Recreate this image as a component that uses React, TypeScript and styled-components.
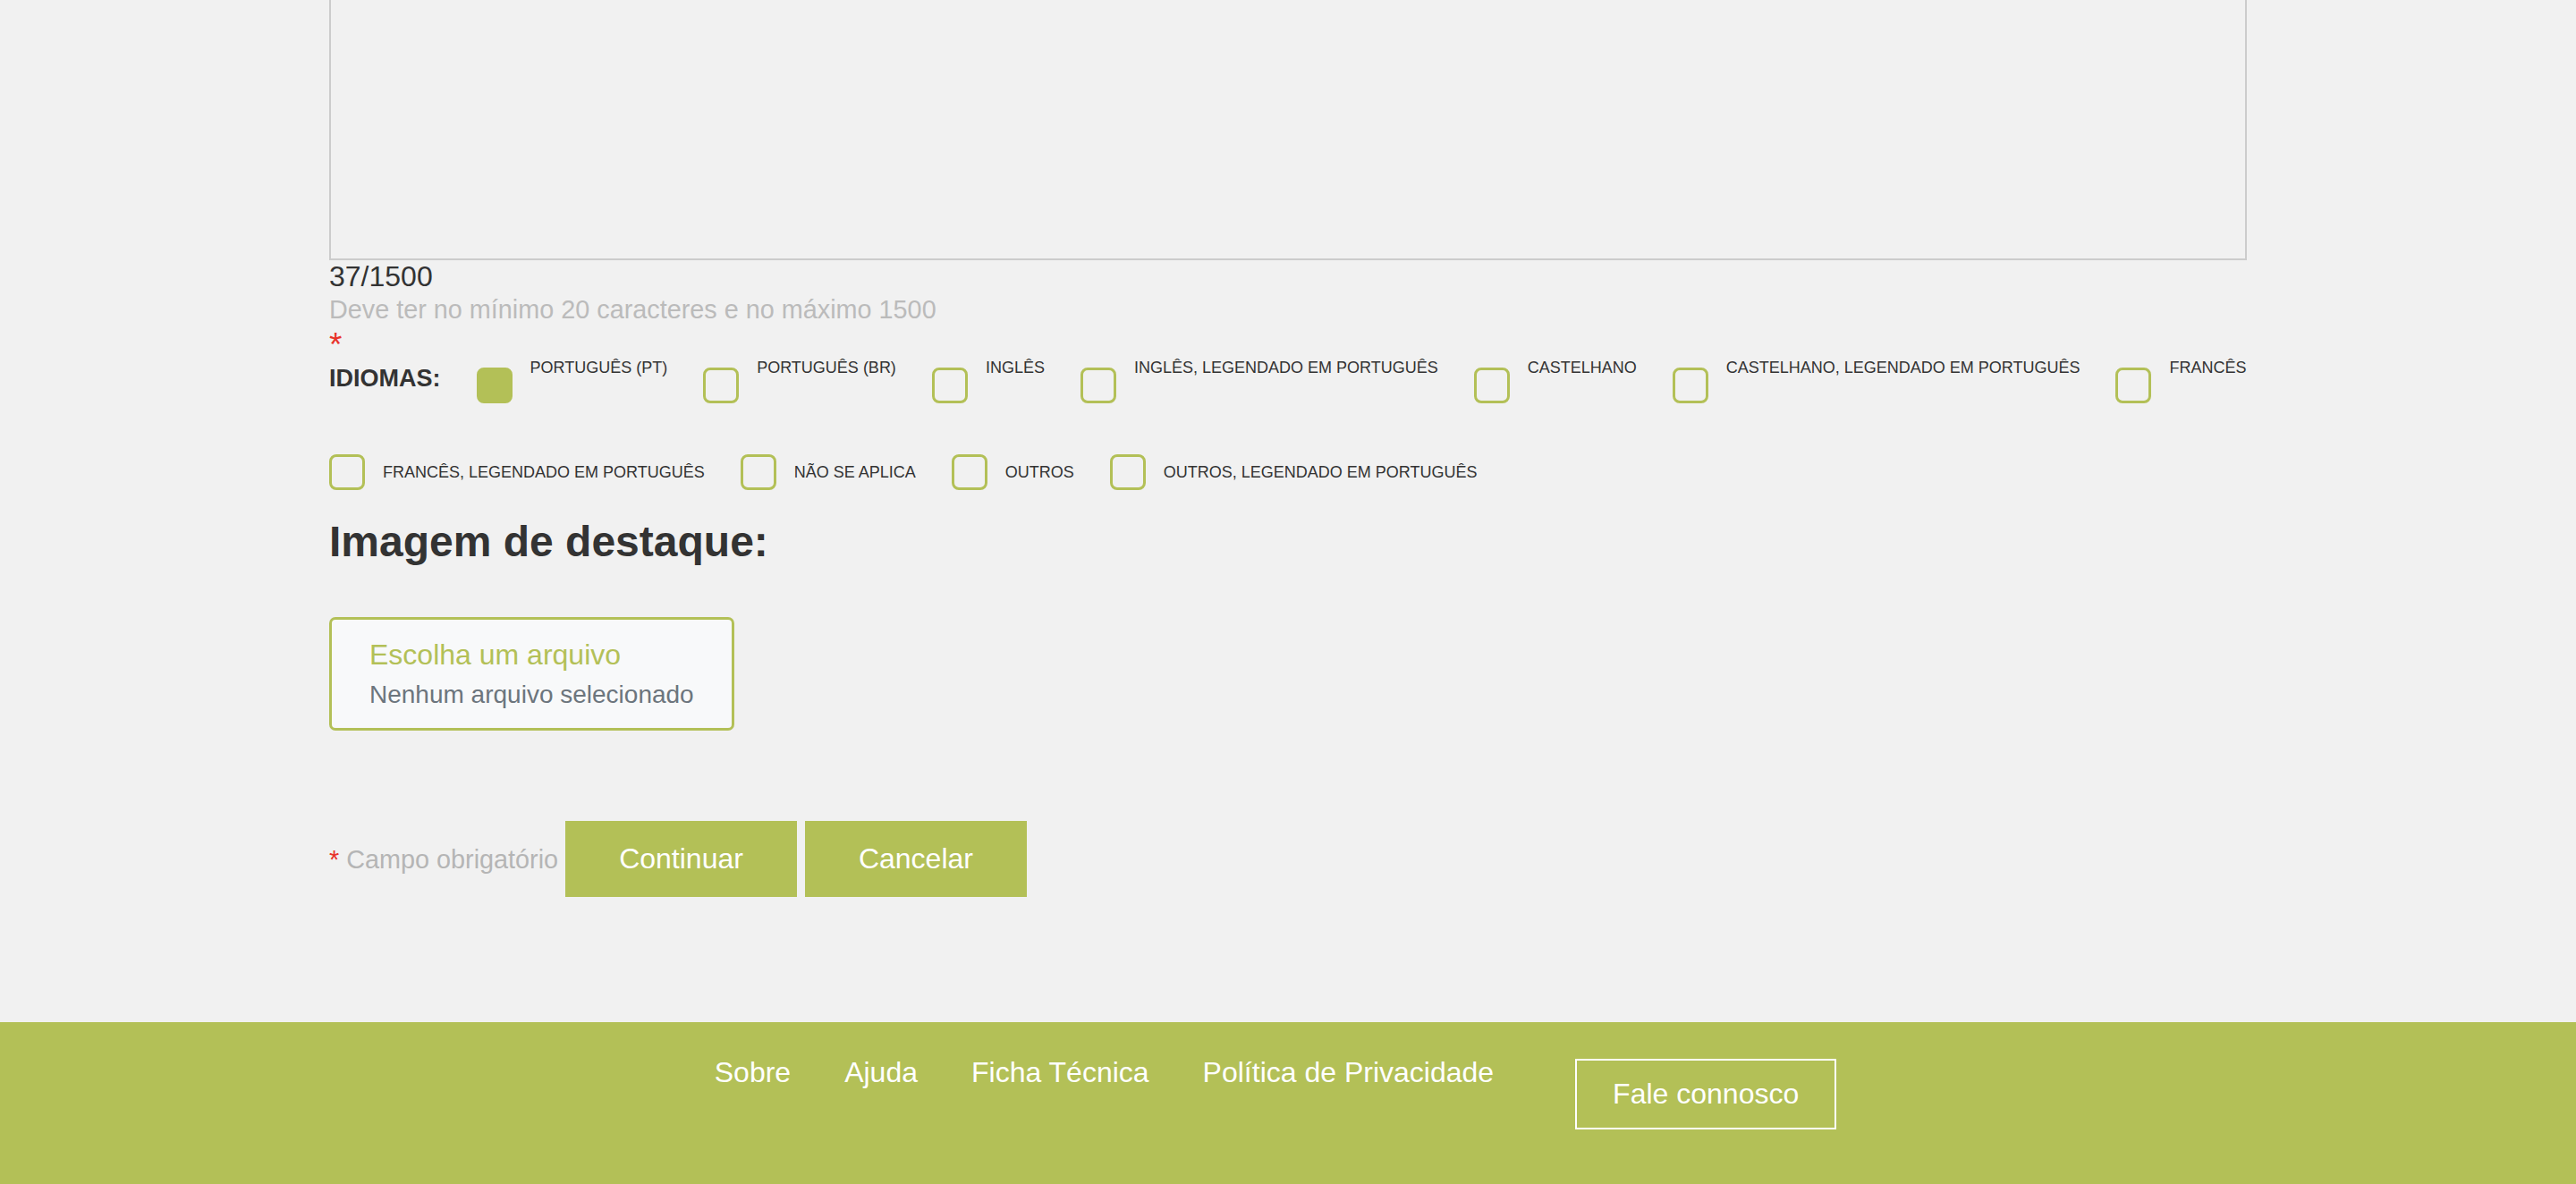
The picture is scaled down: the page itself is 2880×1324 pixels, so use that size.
import React from "react";
import styled, { createGlobalStyle } from "styled-components";

const GREEN = "#b3c057";
const FONT = `"Liberation Sans", Arial, Helvetica, sans-serif`;

const GlobalStyle = createGlobalStyle`
  html, body {
    margin: 0;
    padding: 0;
    background: #f1f1f1;
    font-family: ${FONT};
    color: #333;
  }
  * { box-sizing: border-box; }
`;

const Page = styled.div`
  display: flex;
  flex-direction: column;
  min-height: 100vh;
  background: #f1f1f1;
`;

const Main = styled.main`
  width: 2144px;
  margin: 0 auto;
  display: flex;
  flex-direction: column;
  align-items: flex-start;
`;

const Description = styled.textarea`
  display: block;
  width: 100%;
  height: 331px;
  margin: -40px 0 0;
  padding: 16px;
  border: 2px solid #cccccc;
  background: #f1f1f1;
  font-family: ${FONT};
  font-size: 28px;
  resize: none;
  outline: none;
`;

const Counter = styled.div`
  font-size: 32px;
  line-height: 37px;
  color: #333;
`;

const Hint = styled.div`
  margin-top: 1px;
  font-size: 28.8px;
  line-height: 34px;
  color: #bbbbbb;
`;

const RequiredMark = styled.div`
  margin-top: 8px;
  font-size: 37px;
  line-height: 30px;
  color: #e8332a;
`;

const LanguageRow = styled.div<{ $first?: boolean }>`
  display: flex;
  align-items: ${(p) => (p.$first ? "flex-start" : "center")};
  gap: 40px;
  margin-top: ${(p) => (p.$first ? "0" : "57px")};
`;

const FieldLabel = styled.span`
  margin-top: 7px;
  font-size: 27px;
  line-height: 31px;
  font-weight: 700;
  color: #333;
`;

const Option = styled.label<{ $first?: boolean }>`
  display: flex;
  align-items: ${(p) => (p.$first ? "flex-start" : "center")};
  gap: 20px;
  cursor: pointer;
`;

const Box = styled.input<{ $first?: boolean }>`
  appearance: none;
  -webkit-appearance: none;
  flex: none;
  width: 40px;
  height: 40px;
  margin: ${(p) => (p.$first ? "10px 0 0" : "0")};
  border: 3.5px solid ${GREEN};
  border-radius: 8px;
  background: transparent;
  cursor: pointer;

  &:checked {
    background: ${GREEN};
  }
`;

const OptionText = styled.span`
  font-size: 18px;
  line-height: 21px;
  color: #333;
  white-space: nowrap;
`;

const SectionTitle = styled.h2`
  margin: 30px 0 0;
  font-size: 48px;
  line-height: 55px;
  font-weight: 700;
  color: #333;
`;

const FileBox = styled.label`
  display: flex;
  flex-direction: column;
  gap: 10px;
  margin-top: 57px;
  padding: 21px 42px;
  border: 3px solid ${GREEN};
  border-radius: 7px;
  background: #f8f9fa;
  cursor: pointer;
`;

const FileAction = styled.span`
  font-size: 32px;
  line-height: 37px;
  color: ${GREEN};
`;

const FileStatus = styled.span`
  font-size: 28px;
  line-height: 32px;
  color: #6c757d;
`;

const Actions = styled.div`
  display: flex;
  align-items: center;
  margin-top: 101px;
`;

const RequiredNote = styled.span`
  margin-right: 8px;
  font-size: 28.8px;
  line-height: 34px;
  color: #b5b5b5;
`;

const Star = styled.span`
  color: #e8332a;
`;

const Button = styled.button<{ $gap?: boolean }>`
  height: 85px;
  margin-left: ${(p) => (p.$gap ? "9px" : "0")};
  padding: 0 60px;
  border: none;
  background: ${GREEN};
  color: #fff;
  font-family: ${FONT};
  font-size: 32px;
  cursor: pointer;
`;

const Footer = styled.footer`
  margin-top: 140px;
  height: 181px;
  background: ${GREEN};
  display: flex;
  justify-content: center;
  align-items: flex-start;
  padding: 38px 28px 0 0;
`;

const FooterLinks = styled.nav`
  display: flex;
  gap: 60px;
`;

const FooterLink = styled.a`
  font-size: 32px;
  line-height: 37px;
  color: #fff;
  text-decoration: none;
  white-space: nowrap;
`;

const ContactButton = styled.a`
  margin: 3px 0 0 91px;
  padding: 19px 40px;
  border: 2px solid #fff;
  font-size: 32px;
  line-height: 37px;
  color: #fff;
  text-decoration: none;
  white-space: nowrap;
`;

const firstRow = [
  { label: "PORTUGUÊS (PT)", checked: true },
  { label: "PORTUGUÊS (BR)" },
  { label: "INGLÊS" },
  { label: "INGLÊS, LEGENDADO EM PORTUGUÊS" },
  { label: "CASTELHANO" },
  { label: "CASTELHANO, LEGENDADO EM PORTUGUÊS" },
  { label: "FRANCÊS" },
];

const secondRow = [
  { label: "FRANCÊS, LEGENDADO EM PORTUGUÊS" },
  { label: "NÃO SE APLICA" },
  { label: "OUTROS" },
  { label: "OUTROS, LEGENDADO EM PORTUGUÊS" },
];

const footerLinks = ["Sobre", "Ajuda", "Ficha Técnica", "Política de Privacidade"];

type Lang = { label: string; checked?: boolean };

function LanguageOption({ item, first }: { item: Lang; first?: boolean }) {
  return (
    <Option $first={first}>
      <Box type="checkbox" name="idiomas" defaultChecked={item.checked} $first={first} />
      <OptionText>{item.label}</OptionText>
    </Option>
  );
}

export default function App() {
  return (
    <>
      <GlobalStyle />
      <Page>
        <Main>
          <Description readOnly aria-label="Descrição" />
          <Counter>37/1500</Counter>
          <Hint>Deve ter no mínimo 20 caracteres e no máximo 1500</Hint>
          <RequiredMark>*</RequiredMark>
          <LanguageRow $first>
            <FieldLabel>IDIOMAS:</FieldLabel>
            {firstRow.map((item) => (
              <LanguageOption key={item.label} item={item} first />
            ))}
          </LanguageRow>
          <LanguageRow>
            {secondRow.map((item) => (
              <LanguageOption key={item.label} item={item} />
            ))}
          </LanguageRow>
          <SectionTitle>Imagem de destaque:</SectionTitle>
          <FileBox>
            <FileAction>Escolha um arquivo</FileAction>
            <FileStatus>Nenhum arquivo selecionado</FileStatus>
          </FileBox>
          <Actions>
            <RequiredNote>
              <Star>*</Star> Campo obrigatório
            </RequiredNote>
            <Button>Continuar</Button>
            <Button $gap>Cancelar</Button>
          </Actions>
        </Main>
        <Footer>
          <FooterLinks>
            {footerLinks.map((l) => (
              <FooterLink key={l} href="#">
                {l}
              </FooterLink>
            ))}
          </FooterLinks>
          <ContactButton href="#">Fale connosco</ContactButton>
        </Footer>
      </Page>
    </>
  );
}
